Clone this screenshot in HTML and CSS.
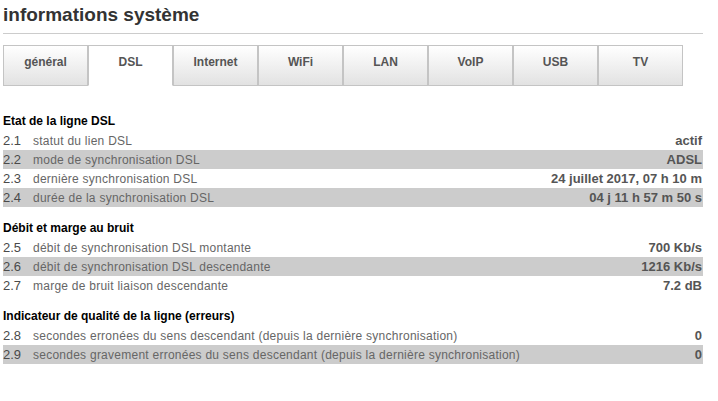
FILE: index.html
```html
<!DOCTYPE html>
<html lang="fr">
<head>
<meta charset="utf-8">
<title>informations système</title>
<link rel="stylesheet" href="styles.css">
</head>
<body>
<div class="page">
  <h1 class="title">informations système</h1>
  <div class="rule"></div>
  <nav class="tabs">
    <div class="tab">général</div>
    <div class="tab active">DSL</div>
    <div class="tab">Internet</div>
    <div class="tab">WiFi</div>
    <div class="tab">LAN</div>
    <div class="tab">VoIP</div>
    <div class="tab">USB</div>
    <div class="tab">TV</div>
  </nav>

  <section class="section first">
    <h2 class="heading">Etat de la ligne DSL</h2>
    <div class="row"><span class="num">2.1</span><span class="label">statut du lien DSL</span><span class="value">actif</span></div>
    <div class="row alt"><span class="num">2.2</span><span class="label">mode de synchronisation DSL</span><span class="value">ADSL</span></div>
    <div class="row"><span class="num">2.3</span><span class="label">dernière synchronisation DSL</span><span class="value">24 juillet 2017, 07 h 10 m</span></div>
    <div class="row alt"><span class="num">2.4</span><span class="label">durée de la synchronisation DSL</span><span class="value">04 j 11 h 57 m 50 s</span></div>
  </section>

  <section class="section">
    <h2 class="heading">Débit et marge au bruit</h2>
    <div class="row"><span class="num">2.5</span><span class="label">débit de synchronisation DSL montante</span><span class="value">700 Kb/s</span></div>
    <div class="row alt"><span class="num">2.6</span><span class="label">débit de synchronisation DSL descendante</span><span class="value">1216 Kb/s</span></div>
    <div class="row"><span class="num">2.7</span><span class="label">marge de bruit liaison descendante</span><span class="value">7.2 dB</span></div>
  </section>

  <section class="section">
    <h2 class="heading">Indicateur de qualité de la ligne (erreurs)</h2>
    <div class="row"><span class="num">2.8</span><span class="label">secondes erronées du sens descendant (depuis la dernière synchronisation)</span><span class="value">0</span></div>
    <div class="row alt"><span class="num">2.9</span><span class="label">secondes gravement erronées du sens descendant (depuis la dernière synchronisation)</span><span class="value">0</span></div>
  </section>
</div>
</body>
</html>
```

FILE: styles.css
```css
html, body {
  margin: 0;
  padding: 0;
  background: #ffffff;
}

.page {
  font-family: "Liberation Sans", Arial, sans-serif;
  width: 700px;
  padding-left: 3px;
}

.title {
  margin: 0;
  padding-top: 4px;
  font-size: 19px;
  line-height: 22px;
  font-weight: bold;
  color: #333333;
}

.rule {
  margin-top: 7px;
  height: 0;
  border-top: 1px solid #cccccc;
}

.tabs {
  display: flex;
  margin-top: 11px;
}

.tab {
  box-sizing: border-box;
  width: 85px;
  height: 41px;
  border: 1px solid #c4c4c4;
  background: linear-gradient(#ffffff, #e2e2e2);
  text-align: center;
  font-size: 12px;
  font-weight: bold;
  color: #555555;
  padding-top: 9px;
  line-height: 14px;
}

.tab.active {
  background: #ffffff;
  border-bottom-color: #ffffff;
}

.section {
  margin-top: 12px;
}

.section.first {
  margin-top: 26px;
}

.heading {
  margin: 0;
  font-size: 12px;
  line-height: 19px;
  font-weight: bold;
  color: #000000;
}

.row {
  display: flex;
  align-items: center;
  height: 19px;
  font-size: 12px;
  color: #666666;
}

.row.alt {
  background: #cccccc;
}

.num {
  width: 30px;
  font-size: 13px;
  color: #4a4a4a;
}

.label {
  flex: 1;
  letter-spacing: 0.25px;
}

.value {
  font-size: 13px;
  font-weight: bold;
  color: #555555;
  padding-right: 1px;
}
```
